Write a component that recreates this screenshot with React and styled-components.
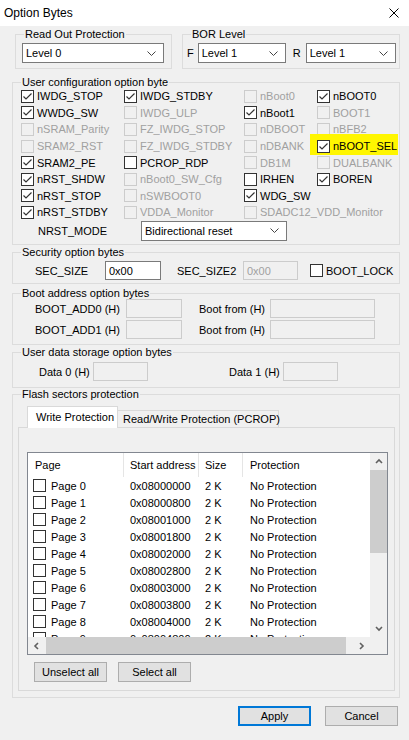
import React from 'react';
import styled, { createGlobalStyle } from 'styled-components';

const GlobalStyle = createGlobalStyle`
  html, body {
    margin: 0;
    padding: 0;
    background: #f0f0f0;
  }
  body {
    font-family: "Liberation Sans", Arial, sans-serif;
    font-size: 11px;
    color: #000;
  }
  * {
    box-sizing: border-box;
  }
`;

const Window = styled.div`
  width: 409px;
  height: 740px;
  background: #f0f0f0;
  display: flex;
  flex-direction: column;
  overflow: hidden;
`;

const TitleBar = styled.div`
  height: 26px;
  flex: none;
  background: #fff;
  display: flex;
  align-items: center;
  justify-content: space-between;
  padding: 0 10px 0 4px;
  font-size: 12px;
`;

const Body = styled.div`
  padding: 2px 9px 0 12px;
  display: flex;
  flex-direction: column;
`;

const Row = styled.div`
  display: flex;
  align-items: ${p => p.$align || 'center'};
  gap: ${p => p.$gap || 0}px;
  margin-top: ${p => p.$mt || 0}px;
  padding-left: ${p => p.$pl || 0}px;
  justify-content: ${p => p.$justify || 'flex-start'};
`;

const Group = styled.fieldset`
  margin: ${p => p.$mt || 0}px 0 0 ${p => p.$ml || 0}px;
  padding: 0;
  border: 1px solid #dcdcdc;
  min-width: 0;
  width: ${p => (p.$w ? `${p.$w}px` : 'auto')};
  height: ${p => p.$h}px;
`;

const Legend = styled.legend`
  padding: 0 1px;
  margin-left: 8px;
  line-height: 12px;
  font-size: 11px;
`;

const Inner = styled.div`
  padding: ${p => p.$pad || '0'};
`;

const SelectBox = styled.div`
  width: ${p => p.$w}px;
  height: 20px;
  margin-left: ${p => p.$ml || 0}px;
  background: #fff;
  border: 1px solid #7a7a7a;
  display: flex;
  align-items: center;
  justify-content: space-between;
  padding: 0 7px 0 3px;
  white-space: nowrap;
`;

const Field = styled.div`
  width: ${p => p.$w}px;
  height: 19px;
  background: ${p => (p.$disabled ? '#f0f0f0' : '#fff')};
  border: 1px solid ${p => (p.$disabled ? '#cccccc' : '#7a7a7a')};
  color: ${p => (p.$disabled ? '#a0a0a0' : '#000')};
  display: flex;
  align-items: center;
  padding-left: 3px;
`;

const Label = styled.span`
  width: ${p => (p.$w ? `${p.$w}px` : 'auto')};
  margin-left: ${p => p.$ml || 0}px;
  text-align: ${p => p.$center ? 'center' : 'left'};
  white-space: nowrap;
  flex: none;
`;

const OptionGrid = styled.div`
  display: grid;
  grid-template-columns: 103px 120px 73px 1fr;
  grid-auto-rows: 16.6px;
  align-items: center;
`;

const CheckItem = styled.div`
  display: inline-flex;
  align-items: center;
  gap: 3px;
  justify-self: start;
  white-space: nowrap;
  color: ${p => (p.$disabled ? '#a0a0a0' : '#000')};
  grid-column: ${p => (p.$span ? `span ${p.$span}` : 'auto')};
  margin-left: ${p => p.$ml || 0}px;
  ${p =>
    p.$mark &&
    `
    background: #fff600;
    margin: -6px -1px -2px -7px;
    padding: 6px 1px 2px 7px;
  `}
`;

const Box = styled.span`
  width: 13px;
  height: 13px;
  flex: none;
  border: 1px solid ${p => (p.$disabled ? '#cccccc' : '#333333')};
  background: ${p => (p.$disabled ? '#f0f0f0' : '#fff')};
  display: flex;
  align-items: center;
  justify-content: center;
`;

const TabArea = styled.div`
  margin: 6px 0 0 5px;
  width: 377px;
`;

const TabStrip = styled.div`
  display: flex;
  align-items: flex-end;
  padding-left: 9px;
  height: 22px;
  position: relative;
  z-index: 1;
  margin-bottom: -1px;
`;

const Tab = styled.div`
  height: ${p => (p.$active ? 22 : 18)}px;
  width: ${p => p.$w}px;
  background: ${p => (p.$active ? '#fff' : '#f0f0f0')};
  border: 1px solid #d9d9d9;
  border-bottom: ${p => (p.$active ? 'none' : '1px solid #d9d9d9')};
  border-left: ${p => (p.$first ? '1px solid #d9d9d9' : 'none')};
  display: flex;
  align-items: center;
  padding-left: ${p => p.$pl}px;
  padding-bottom: ${p => (p.$active ? 2 : 0)}px;
  white-space: nowrap;
`;

const TabPanel = styled.div`
  height: 264px;
  border: 1px solid #d9d9d9;
  background: #f0f0f0;
  padding: 24px 0 0 8px;
`;

const ListView = styled.div`
  width: 361px;
  height: 203px;
  border: 1px solid #828790;
  background: #fff;
  display: flex;
  flex-direction: column;
`;

const ListTop = styled.div`
  display: flex;
  height: 184px;
`;

const ListContent = styled.div`
  flex: 1;
  overflow: hidden;
`;

const cols = '96px 75px 44px 1fr';

const HeaderRow = styled.div`
  display: grid;
  grid-template-columns: ${cols};
  height: 24px;
`;

const HeaderCell = styled.div`
  display: flex;
  align-items: center;
  padding-left: ${p => p.$pl || 6}px;
  border-right: ${p => (p.$last ? 'none' : '1px solid #e5e5e5')};
`;

const DataRows = styled.div`
  height: 160px;
  overflow: hidden;
`;

const DataRow = styled.div`
  display: grid;
  grid-template-columns: ${cols};
  height: 17px;
  align-items: center;
`;

const DataCell = styled.div`
  display: flex;
  align-items: center;
  gap: 5px;
  padding-left: ${p => p.$pl || 6}px;
  white-space: nowrap;
`;

const VScroll = styled.div`
  width: 17px;
  background: #f0f0f0;
  display: flex;
  flex-direction: column;
`;

const HScroll = styled.div`
  height: 17px;
  display: flex;
  background: #f0f0f0;
`;

const ArrowCell = styled.div`
  width: 17px;
  height: 17px;
  flex: none;
  display: flex;
  align-items: center;
  justify-content: center;
`;

const Thumb = styled.div`
  background: #cdcdcd;
  flex: none;
  width: ${p => (p.$w ? `${p.$w}px` : 'auto')};
  height: ${p => (p.$h ? `${p.$h}px` : 'auto')};
  align-self: stretch;
  margin: ${p => p.$m || 0};
`;

const Track = styled.div`
  flex: 1;
`;

const Corner = styled.div`
  width: 17px;
  background: #f0f0f0;
`;

const Button = styled.div`
  width: 73px;
  height: 20px;
  background: #e1e1e1;
  border: 1px solid ${p => (p.$default ? '#0078d7' : '#adadad')};
  box-shadow: ${p => (p.$default ? 'inset 0 0 0 1px #0078d7' : 'none')};
  display: flex;
  align-items: center;
  justify-content: center;
  font-size: 11px;
`;

const Chevron = () => (
  <svg width="9" height="5" viewBox="0 0 9 5">
    <polyline points="0.5,0.5 4.5,4.5 8.5,0.5" fill="none" stroke="#444" strokeWidth="1" />
  </svg>
);

const Arrow = ({ dir }) => {
  const pts = {
    up: '1,5 4,2 7,5',
    down: '1,2 4,5 7,2',
    left: '5,1 2,4 5,7',
    right: '2,1 5,4 2,7',
  }[dir];
  return (
    <svg width="8" height="8" viewBox="0 0 8 8">
      <polyline points={pts} fill="none" stroke="#606060" strokeWidth="1.6" />
    </svg>
  );
};

const Select = ({ value, w, ml }) => (
  <SelectBox $w={w} $ml={ml}>
    <span>{value}</span>
    <Chevron />
  </SelectBox>
);

const CheckBox = ({ checked, disabled, label, span, mark, ml }) => (
  <CheckItem $disabled={disabled} $span={span} $mark={mark} $ml={ml}>
    <Box $disabled={disabled}>
      {checked && (
        <svg width="11" height="11" viewBox="0 0 11 11">
          <polyline points="1.5,5.5 4,8 9.5,2.5" fill="none" stroke="#333" strokeWidth="1.2" />
        </svg>
      )}
    </Box>
    {label && <span>{label}</span>}
  </CheckItem>
);

const C = 'c';
const D = 'd';
const U = 'u';
const options = [
  ['IWDG_STOP', C], ['IWDG_STDBY', C], ['nBoot0', D], ['nBOOT0', C],
  ['WWDG_SW', C], ['IWDG_ULP', D], ['nBoot1', C], ['BOOT1', D],
  ['nSRAM_Parity', D], ['FZ_IWDG_STOP', D], ['nDBOOT', D], ['nBFB2', D],
  ['SRAM2_RST', D], ['FZ_IWDG_STDBY', D], ['nDBANK', D], ['nBOOT_SEL', C, 'mark'],
  ['SRAM2_PE', C], ['PCROP_RDP', U], ['DB1M', D], ['DUALBANK', D],
  ['nRST_SHDW', C], ['nBoot0_SW_Cfg', D], ['IRHEN', U], ['BOREN', C],
  ['nRST_STOP', C], ['nSWBOOT0', D], ['WDG_SW', C], null,
  ['nRST_STDBY', C], ['VDDA_Monitor', D], ['SDADC12_VDD_Monitor', D, 'span'],
];

const pages = Array.from({ length: 10 }, (_, i) => ({
  name: `Page ${i}`,
  addr: '0x' + (0x08000000 + i * 0x800).toString(16).toUpperCase().padStart(8, '0'),
}));

export default function App() {
  return (
    <>
      <GlobalStyle />
      <Window>
        <TitleBar>
          <span>Option Bytes</span>
          <svg width="10" height="10" viewBox="0 0 10 10">
            <path d="M0.5 0.5 L9.5 9.5 M9.5 0.5 L0.5 9.5" stroke="#000" strokeWidth="1" />
          </svg>
        </TitleBar>
        <Body>
          <Row $align="flex-start">
            <Group $ml={3} $w={157} $h={41}>
              <Legend>Read Out Protection</Legend>
              <Inner $pad="3px 0 0 6px">
                <Select value="Level 0" w={142} />
              </Inner>
            </Group>
            <Group $ml={10} $w={218} $h={41}>
              <Legend>BOR Level</Legend>
              <Inner $pad="3px 0 0 4px">
                <Row>
                  <Label>F</Label>
                  <Select value="Level 1" w={88} ml={4} />
                  <Label $ml={7}>R</Label>
                  <Select value="Level 1" w={90} ml={5} />
                </Row>
              </Inner>
            </Group>
          </Row>

          <Group $mt={7} $h={169}>
            <Legend>User configuration option byte</Legend>
            <Inner $pad="0 0 0 8px">
              <OptionGrid>
                {options.map((o, i) =>
                  o ? (
                    <CheckBox
                      key={i}
                      label={o[0]}
                      checked={o[1] === C}
                      disabled={o[1] === D}
                      mark={o[2] === 'mark'}
                      span={o[2] === 'span' ? 2 : undefined}
                    />
                  ) : (
                    <span key={i} />
                  )
                )}
              </OptionGrid>
              <Row>
                <Label $w={103} $center>NRST_MODE</Label>
                <Select value="Bidirectional reset" w={146} ml={17} />
              </Row>
            </Inner>
          </Group>

          <Group $mt={1} $h={38}>
            <Legend>Security option bytes</Legend>
            <Row $mt={3} $pl={22}>
              <Label $w={70}>SEC_SIZE</Label>
              <Field $w={56}>0x00</Field>
              <Label $w={66} $ml={16}>SEC_SIZE2</Label>
              <Field $w={55} $disabled>0x00</Field>
              <CheckBox label="BOOT_LOCK" ml={12} />
            </Row>
          </Group>

          <Group $mt={3} $h={58}>
            <Legend>Boot address option bytes</Legend>
            <Row $pl={22}>
              <Label $w={91}>BOOT_ADD0 (H)</Label>
              <Field $w={56} $disabled />
              <Label $w={71} $ml={17}>Boot from (H)</Label>
              <Field $w={105} $disabled />
            </Row>
            <Row $pl={22} $mt={2}>
              <Label $w={91}>BOOT_ADD1 (H)</Label>
              <Field $w={56} $disabled />
              <Label $w={71} $ml={17}>Boot from (H)</Label>
              <Field $w={105} $disabled />
            </Row>
          </Group>

          <Group $mt={1} $h={42}>
            <Legend>User data storage option bytes</Legend>
            <Row $mt={4} $pl={26}>
              <Label $w={54}>Data 0 (H)</Label>
              <Field $w={55} $disabled />
              <Label $w={54} $ml={81}>Data 1 (H)</Label>
              <Field $w={55} $disabled />
            </Row>
          </Group>

          <Group $h={310}>
            <Legend>Flash sectors protection</Legend>
            <TabArea>
              <TabStrip>
                <Tab $active $first $w={91} $pl={8}>Write Protection</Tab>
                <Tab $w={161} $pl={5}>Read/Write Protection (PCROP)</Tab>
              </TabStrip>
              <TabPanel>
                <ListView>
                  <ListTop>
                    <ListContent>
                      <HeaderRow>
                        <HeaderCell $pl={7}>Page</HeaderCell>
                        <HeaderCell>Start address</HeaderCell>
                        <HeaderCell>Size</HeaderCell>
                        <HeaderCell $pl={7} $last>Protection</HeaderCell>
                      </HeaderRow>
                      <DataRows>
                        {pages.map(p => (
                          <DataRow key={p.name}>
                            <DataCell $pl={5}>
                              <Box />
                              <span>{p.name}</span>
                            </DataCell>
                            <DataCell>{p.addr.replace('0X', '0x')}</DataCell>
                            <DataCell>2 K</DataCell>
                            <DataCell $pl={7}>No Protection</DataCell>
                          </DataRow>
                        ))}
                      </DataRows>
                    </ListContent>
                    <VScroll>
                      <ArrowCell><Arrow dir="up" /></ArrowCell>
                      <Thumb $h={83} />
                      <Track />
                      <ArrowCell><Arrow dir="down" /></ArrowCell>
                    </VScroll>
                  </ListTop>
                  <HScroll>
                    <ArrowCell><Arrow dir="left" /></ArrowCell>
                    <Thumb $w={300} $m="0 0 0 1px" />
                    <Track />
                    <ArrowCell><Arrow dir="right" /></ArrowCell>
                    <Corner />
                  </HScroll>
                </ListView>
                <Row $mt={7} $pl={7} $gap={11}>
                  <Button>Unselect all</Button>
                  <Button>Select all</Button>
                </Row>
              </TabPanel>
            </TabArea>
          </Group>

          <Row $mt={8} $gap={14} $justify="flex-end">
            <Button $default>Apply</Button>
            <Button style={{ marginRight: 2 }}>Cancel</Button>
          </Row>
        </Body>
      </Window>
    </>
  );
}
